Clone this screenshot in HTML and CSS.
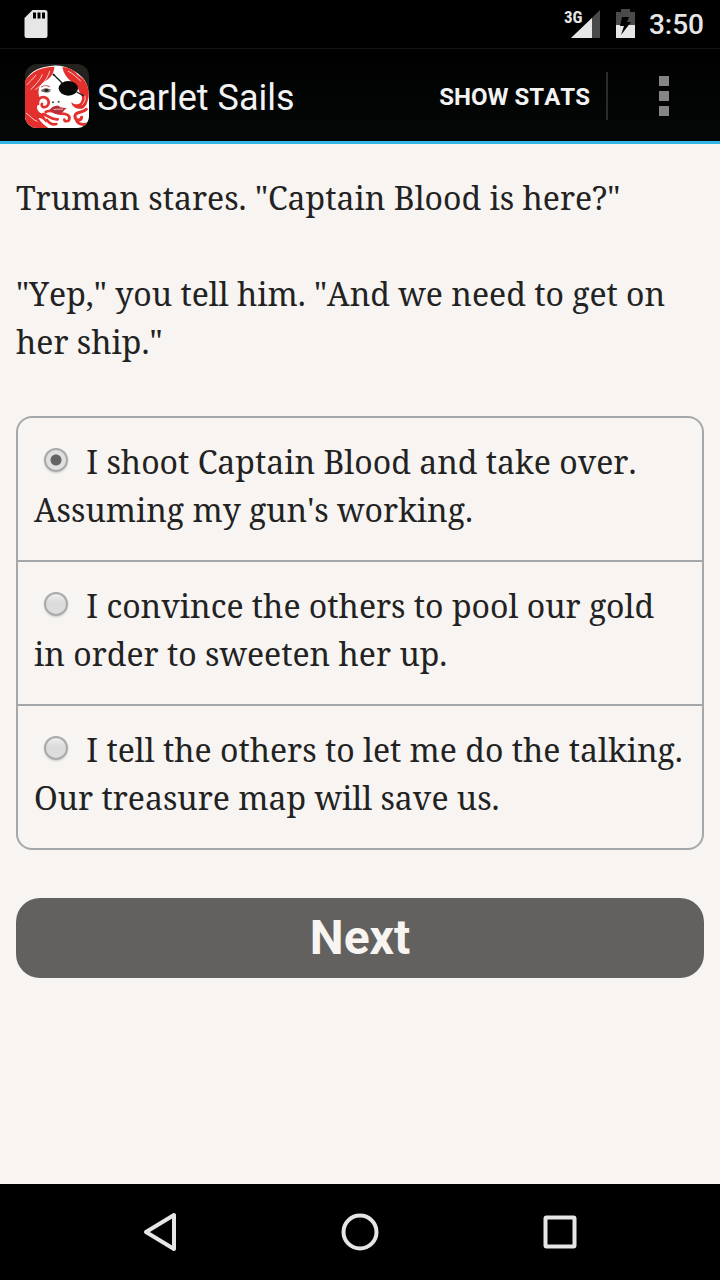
FILE: index.html
```html
<!DOCTYPE html>
<html lang="en">
<head>
<meta charset="utf-8">
<meta name="viewport" content="width=device-width, initial-scale=1">
<title>Scarlet Sails</title>
<link rel="stylesheet" href="styles.css">
</head>
<body>
<div class="status-bar">
  <svg class="sd-icon" viewBox="0 0 24 30" width="24" height="30" aria-hidden="true">
    <path fill="#e6e6e6" fill-rule="evenodd" d="M8.500 1H21a2.500 2.500 0 0 1 2.500 2.500v23A2.500 2.500 0 0 1 21 29H3A2.500 2.500 0 0 1 .5 26.500V9zM9 3.500v6h3v-6zm4.500 0v6h3v-6zm4.500 0v6h3v-6z"/>
  </svg>
  <div class="status-right">
    <div class="signal">
      <span class="network">3G</span>
      <svg viewBox="0 0 29 30" width="29" height="30" aria-hidden="true">
        <path fill="#4a4a4a" d="M29 1v28H0z"/>
        <path fill="#e6e6e6" d="M21 9v20H0z"/>
      </svg>
    </div>
    <svg class="battery" viewBox="0 0 19 30" width="19" height="30" aria-hidden="true">
      <path fill="#4a4a4a" d="M5 0h9v3h5v13H0V3h5z"/>
      <path fill="#e6e6e6" d="M0 16h19v13H0z"/>
      <path fill="#000" d="M6 8h7l-2 5h4L5 26l3-9H4z"/>
    </svg>
    <span class="clock">3:50</span>
  </div>
</div>
<header class="action-bar">
  <svg class="app-icon" viewBox="12 12 192 192" width="64" height="64" role="img" aria-label="Scarlet Sails icon">
    <rect x="12" y="12" width="192" height="192" fill="#24221e"/>
    <path fill="#fff" d="M12 204V66c10-26 36-43 71-47 41-10 80 12 103 35 16 19 18 43 18 68v82z"/>
    <path fill="#e4302c" d="M12 204V62C32 34 62 20 100 20c0 14-8 30-22 40-12 7-20 13-24 25-3 12-1 22 2 28-8 6-10 14-6 22-6 10 2 22 16 28 6 10 12 18 10 26-8-10-16-16-24-15 6 12 18 22 30 30z"/>
    <path fill="#e4302c" d="M124 22c20 0 34 8 46 22 14 8 24 18 28 32 8 20 6 40-2 58-6 10-14 14-22 12-12 0-22-8-23-20 7 8 20 10 27 2 8-10 6-22-2-30-4-18-16-28-28-36-12-10-20-22-24-40z"/>
    <g fill="none" stroke="#e4302c" stroke-width="8" stroke-linecap="round">
      <path d="M51 132c-2-14 8-23 20-20 13 3 16 20 6 27-9 6-18 0-14-7"/>
      <path d="M74 156c16-10 30 5 46 5 16-1 28 6 25 16-2 9-14 8-15 2M66 162c18 6 24 18 44 16M78 180c10 14 22 14 28 12"/>
      <path d="M196 148c-12 14-32 4-34 20-1 14 18 16 20 4M166 180c4 10 16 16 34 12" stroke-width="9"/>
    </g>
    <g fill="none" stroke="#fff" stroke-width="3" stroke-linecap="round" opacity=".75">
      <path d="M30 88c14-16 26-24 34-44M44 88c18-12 34-28 42-54M18 74c10-12 18-16 26-28M16 160c12 6 16 18 32 24M142 34c14 6 24 18 36 28M192 108c2 12-2 20-8 26"/>
    </g>
    <path fill="none" stroke="#191919" stroke-width="4" d="m96 42 28 28m43 26 22 12"/>
    <circle cx="98" cy="44" r="3" fill="#191919"/>
    <path fill="none" stroke="#b0564e" stroke-width="3" d="M60 82c8-7 20-6 27-1"/>
    <path fill="#77685f" d="M59 92c7-8 18-10 27-4l6 1-6 3 2 3c-12 5-21 2-29-3z"/>
    <circle cx="76" cy="91" r="5" fill="#222"/>
    <ellipse cx="142" cy="85" rx="29" ry="22" fill="#080808"/>
    <circle cx="96" cy="127" r="3" fill="#444"/><circle cx="113" cy="125" r="3" fill="#444"/>
    <path fill="#b6313c" d="M85 149c7-5 12-13 19-11 4-4 11-1 14 4l19 3c-9 5-10 15-25 17-12 2-17-8-27-13z"/>
    <path fill="none" stroke="#e8b8b8" stroke-width="3" d="M98 149c12-3 20 0 28-2"/>
  </svg>
  <h1 class="app-title">Scarlet Sails</h1>
  <button class="stats-button" type="button">SHOW STATS</button>
  <button class="menu-button" type="button" aria-label="More options">
    <svg viewBox="0 0 10 40" width="10" height="40" aria-hidden="true"><path fill="#858585" d="M0 0h10v10H0zM0 15h10v10H0zM0 30h10v10H0z"/></svg>
  </button>
</header>
<main class="story">
  <p class="passage">Truman stares. "Captain Blood is here?"</p>
  <p class="passage">"Yep," you tell him. "And we need to get on her ship."</p>
  <form class="choice-form">
    <div class="choices">
      <label class="choice"><input class="radio" type="radio" name="choice" checked> I shoot Captain Blood and take over. Assuming my gun's working.</label>
      <label class="choice"><input class="radio" type="radio" name="choice"> I convince the others to pool our gold in order to sweeten her up.</label>
      <label class="choice"><input class="radio" type="radio" name="choice"> I tell the others to let me do the talking. Our treasure map will save us.</label>
    </div>
    <button class="next-button" type="button">Next</button>
  </form>
</main>
<nav class="nav-bar" aria-label="System">
  <button class="nav-button" type="button" aria-label="Back">
    <svg viewBox="0 0 40 40" width="40" height="40" aria-hidden="true"><path fill="none" stroke="#e6e6e6" stroke-width="4" stroke-linejoin="round" d="M34 3v34L6 20z"/></svg>
  </button>
  <button class="nav-button" type="button" aria-label="Home">
    <svg viewBox="0 0 40 40" width="40" height="40" aria-hidden="true"><circle cx="20" cy="20" r="16.500" fill="none" stroke="#e6e6e6" stroke-width="4"/></svg>
  </button>
  <button class="nav-button" type="button" aria-label="Recent apps">
    <svg viewBox="0 0 40 40" width="40" height="40" aria-hidden="true"><rect x="5.500" y="5.500" width="29" height="29" rx="1" fill="none" stroke="#e6e6e6" stroke-width="4"/></svg>
  </button>
</nav>
</body>
</html>
```
FILE: styles.css
```css
* { box-sizing: border-box; }
body {
  margin: 0;
  min-height: 100vh;
  display: flex;
  flex-direction: column;
  background: #f7f4f1;
  color: #222;
  font-family: Roboto, sans-serif;
  font-kerning: none;
}
button { border: 0; padding: 0; background: none; font-family: inherit; font-kerning: inherit; }
svg { display: block; }
.status-bar {
  height: 48px;
  padding: 0 16px 0 24px;
  display: flex;
  align-items: center;
  justify-content: space-between;
  background: #000;
  color: #e6e6e6;
}
.status-right { display: flex; align-items: center; gap: 16px; }
.signal { position: relative; }
.network {
  position: absolute;
  left: -7px;
  top: 0;
  font-family: "Roboto Condensed", Roboto, sans-serif;
  font-size: 17px;
  line-height: 16px;
  font-weight: 700;
}
.clock { font-size: 28px; line-height: 48px; padding-top: 2px; font-weight: 500; margin-left: -2px; }
.action-bar {
  height: 96px;
  padding: 2px 0 0 25px;
  display: flex;
  align-items: center;
  border-top: 1px solid #131313;
  border-bottom: 3px solid #33b5e5;
  background: linear-gradient(#000, #050807);
  color: #f3f3f3;
}
.app-icon { border-radius: 12px; }
.app-title { margin: 0 auto 0 8px; padding-top: 4px; font-size: 36px; font-weight: 400; }
.stats-button {
  height: 48px;
  padding: 2px 16px 0 0;
  border-right: 2px solid #2a2c2b;
  color: #f3f3f3;
  font-size: 24px;
  font-weight: 700;
}
.menu-button {
  width: 112px;
  height: 90px;
  display: flex;
  align-items: center;
  justify-content: center;
}
.story {
  flex: 1;
  padding: 30px 16px;
  font-family: "Noto Serif", "Droid Serif", "DejaVu Serif Condensed", "DejaVu Serif", serif;
  font-size: 32px;
  line-height: 48px;
}
.passage { margin: 0 0 48px; }
.choices {
  margin-top: 50px;
  border: 2px solid #a5a8ab;
  border-radius: 16px;
}
.choice { display: block; padding: 20px 16px 26px; }
.choice + .choice { border-top: 2px solid #a5a8ab; }
.radio {
  appearance: none;
  width: 24px;
  height: 24px;
  margin: 0 10px 2px;
  border: 2px solid #a9a9a9;
  border-radius: 50%;
  background: linear-gradient(#eee, #dcdcdc 40%, #ddd);
  box-shadow: 0 1px 2px #ccc;
}
.radio:checked { background: radial-gradient(circle, #646464 5px, #e0e0e0 6px); }
.next-button {
  display: block;
  width: 100%;
  margin-top: 48px;
  height: 80px;
  padding-bottom: 2px;
  border-radius: 24px;
  background: #62615f;
  color: #f7f4f1;
  font-family: Roboto, sans-serif;
  font-size: 48px;
  font-weight: 700;
}
.nav-bar {
  height: 96px;
  padding: 0 60px;
  display: flex;
  background: #000;
}
.nav-button { flex: 1; display: flex; align-items: center; justify-content: center; }
```
